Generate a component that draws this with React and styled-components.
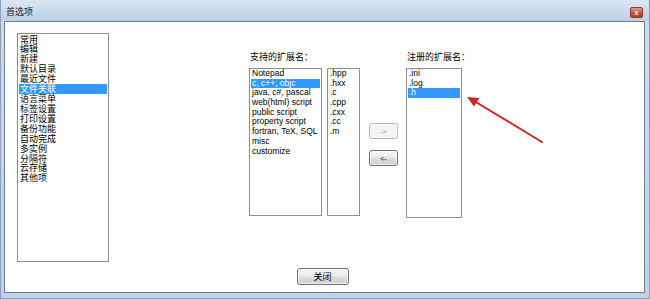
import React from "react";
import styled, { createGlobalStyle } from "styled-components";

const Global = createGlobalStyle`
  html, body { margin: 0; padding: 0; background: #ffffff; }
  * { box-sizing: border-box; }
`;

const CJK = `"Noto Sans CJK SC", "Liberation Sans", sans-serif`;
const LATIN = `"Liberation Sans", "Noto Sans CJK SC", sans-serif`;

const Window = styled.div`
  width: 650px;
  height: 299px;
  display: flex;
  flex-direction: column;
  background: linear-gradient(180deg, #cfdeee 0%, #bfd2e7 100%);
  border-left: 1px solid #8aa0b8;
  border-right: 1px solid #8aa0b8;
  border-bottom: 1px solid #8aa0b8;
`;

const TitleBar = styled.div`
  height: 21px;
  display: flex;
  align-items: center;
  justify-content: space-between;
  padding: 0 5px 0 5px;
  background: linear-gradient(180deg, #dce7f3 0%, #c9d9eb 55%, #bccfe5 100%);
`;

const Title = styled.span`
  font-family: ${CJK};
  font-size: 9px;
  line-height: 12px;
  color: #1a1a1a;
  margin-top: 2px;
`;

const CloseX = styled.div`
  width: 13px;
  height: 11px;
  margin-top: 3px;
  margin-right: 1px;
  border: 1px solid #8a3a2c;
  border-radius: 2px;
  background: linear-gradient(180deg, #e49a86 0%, #cf5a40 50%, #b8391f 100%);
  color: #fff;
  font-family: ${LATIN};
  font-weight: bold;
  font-size: 7px;
  line-height: 9px;
  text-align: center;
`;

const Body = styled.div`
  position: relative;
  flex: 1;
  margin: 0 4px 5px 3px;
  background: #ffffff;
  border: 1px solid #6d7d8e;
  display: flex;
  flex-direction: column;
  padding-top: 11px;
`;

const MainRow = styled.div`
  display: flex;
  align-items: flex-start;
  padding-left: 12px;
`;

const ListBox = styled.div`
  width: ${(p) => p.$w}px;
  height: ${(p) => p.$h}px;
  border: 1px solid #8c8e92;
  background: #fff;
  padding: ${(p) => p.$pt || 0}px 1px 0 1px;
  display: flex;
  flex-direction: column;
  overflow: hidden;
`;

const Item = styled.div`
  height: ${(p) => p.$lh}px;
  line-height: ${(p) => p.$lh}px;
  padding-left: ${(p) => p.$pl}px;
  font-family: ${(p) => (p.$cjk ? CJK : LATIN)};
  font-size: ${(p) => (p.$cjk ? 9 : 8.5)}px;
  white-space: nowrap;
  color: ${(p) => (p.$sel ? "#ffffff" : "#000000")};
  background: ${(p) => (p.$sel ? "#3399ff" : "transparent")};
`;

const Group = styled.div`
  display: flex;
  flex-direction: column;
  margin-left: ${(p) => p.$ml}px;
`;

const Label = styled.div`
  font-family: ${CJK};
  font-size: 9px;
  line-height: 12px;
  height: 12px;
  margin-top: 18px;
  margin-bottom: 5px;
  margin-left: 1px;
  color: #000;
  white-space: nowrap;
`;

const BoxRow = styled.div`
  display: flex;
  gap: 5px;
`;

const ButtonCol = styled.div`
  display: flex;
  flex-direction: column;
  gap: 11px;
  margin-left: 9px;
  margin-top: 90px;
`;

const WinButton = styled.button`
  width: ${(p) => p.$w}px;
  height: ${(p) => p.$h}px;
  padding: 0;
  border: 1px solid ${(p) => (p.disabled ? "#b5b9bc" : "#707070")};
  border-radius: 3px;
  background: ${(p) =>
    p.disabled
      ? "#f4f4f4"
      : "linear-gradient(180deg, #f6f6f6 0%, #ebebeb 48%, #dddddd 52%, #cfcfcf 100%)"};
  color: ${(p) => (p.disabled ? "#8f8f8f" : "#000")};
  font-family: ${(p) => (p.$cjk ? CJK : LATIN)};
  font-size: ${(p) => (p.$cjk ? 9 : 7)}px;
  line-height: 1;
  display: flex;
  align-items: center;
  justify-content: center;
  box-shadow: inset 0 0 0 1px rgba(255, 255, 255, 0.7);
`;

const Footer = styled.div`
  display: flex;
  justify-content: center;
  padding-right: 4px;
  margin-top: 6px;
`;

const ArrowSvg = styled.svg`
  position: absolute;
  left: 451px;
  top: 63px;
  width: 95px;
  height: 65px;
  overflow: visible;
`;

const categories = [
  "常用", "编辑", "新建", "默认目录", "最近文件", "文件关联", "语言菜单",
  "标签设置", "打印设置", "备份功能", "自动完成", "多实例", "分隔符", "云存储", "其他项",
];

const langs = [
  "Notepad", "c, c++, objc", "java, c#, pascal", "web(html) script",
  "public script", "property script", "fortran, TeX, SQL", "misc", "customize",
];

const exts = [".hpp", ".hxx", ".c", ".cpp", ".cxx", ".cc", ".m"];
const registered = [".ini", ".log", ".h"];

export default function App() {
  return (
    <>
      <Global />
      <Window>
        <TitleBar>
          <Title>首选项</Title>
          <CloseX>x</CloseX>
        </TitleBar>
        <Body>
          <MainRow>
            <ListBox $w={92} $h={229} $pt={0.5}>
              {categories.map((c) => (
                <Item key={c} $cjk $lh={9.93} $pl={1} $sel={c === "文件关联"}>
                  {c}
                </Item>
              ))}
            </ListBox>
            <Group $ml={140}>
              <Label>支持的扩展名：</Label>
              <BoxRow>
                <ListBox $w={73} $h={148}>
                  {langs.map((l) => (
                    <Item key={l} $lh={9.7} $pl={1} $sel={l === "c, c++, objc"}>
                      {l}
                    </Item>
                  ))}
                </ListBox>
                <ListBox $w={33} $h={148}>
                  {exts.map((e) => (
                    <Item key={e} $lh={9.7} $pl={1}>
                      {e}
                    </Item>
                  ))}
                </ListBox>
              </BoxRow>
            </Group>
            <ButtonCol>
              <WinButton $w={29} $h={16} disabled>
                -&gt;
              </WinButton>
              <WinButton $w={29} $h={16}>
                &lt;-
              </WinButton>
            </ButtonCol>
            <Group $ml={8}>
              <Label>注册的扩展名：</Label>
              <ListBox $w={56} $h={150}>
                {registered.map((r) => (
                  <Item key={r} $lh={9.7} $pl={1} $sel={r === ".h"}>
                    {r}
                  </Item>
                ))}
              </ListBox>
            </Group>
          </MainRow>
          <Footer>
            <WinButton $w={52} $h={17} $cjk>
              关闭
            </WinButton>
          </Footer>
          <ArrowSvg viewBox="0 0 95 65">
            <line x1="86" y1="57" x2="19" y2="16.5" stroke="#d02424" strokeWidth="2" strokeLinecap="round" />
            <polygon points="11,12 23.5,13 18,21.5" fill="#d02424" />
          </ArrowSvg>
        </Body>
      </Window>
    </>
  );
}
